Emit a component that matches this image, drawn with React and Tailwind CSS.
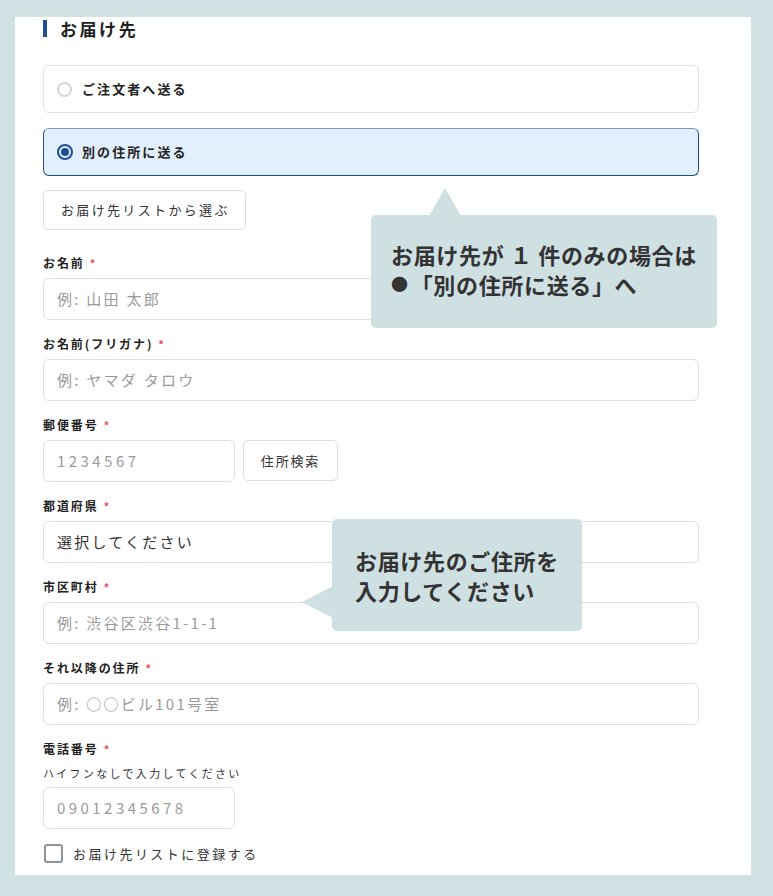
import React from "react";

const FONT = { fontFamily: '"Noto Sans CJK JP", "Noto Sans", sans-serif' };

function Label({ children }) {
  return (
    <div className="flex items-center h-[18px] text-[12px] font-bold text-[#222] tracking-[0.16em]">
      <span>{children}</span>
      <span className="ml-[5px] text-[#ee4d4d] text-[11px]">*</span>
    </div>
  );
}

function Input({ placeholder, w = "w-full", dark = false, num = false }) {
  return (
    <div
      className={`${w} h-[42px] rounded-[6px] border border-[#dedede] bg-white flex items-center px-[13px] text-[15px] ${
        num ? "tracking-[0.23em]" : "tracking-[0.15em]"
      } ${dark ? "text-[#333]" : "text-[#9a9a9a]"}`}
    >
      {placeholder}
    </div>
  );
}

function Field({ label, placeholder, w, dark, num, mt = "mt-[15px]", extra }) {
  return (
    <div className={mt}>
      <Label>{label}</Label>
      <div className="mt-[6px] flex gap-[8px]">
        <Input placeholder={placeholder} w={w} dark={dark} num={num} />
        {extra}
      </div>
    </div>
  );
}

export default function App() {
  return (
    <div style={FONT} className="relative w-[773px] h-[896px] bg-[#d0e1e3] overflow-hidden">
      <div className="absolute left-[15px] top-[17px] w-[736px] h-[858px] bg-white" />
      <div className="relative pl-[43px] pt-[19px] w-[699px]">
        {/* Heading */}
        <div className="flex items-center h-[18px]">
          <div className="w-[4px] h-[17px] bg-[#1d4f91]" />
          <div className="ml-[13px] text-[17px] font-bold text-[#222] tracking-[0.15em] leading-none">お届け先</div>
        </div>

        {/* Radio cards */}
        <div className="mt-[28px] h-[48px] rounded-[6px] border border-[#e0e0e0] bg-white flex items-center pl-[13px]">
          <div className="w-[15px] h-[15px] rounded-full border-2 border-[#d4d4d4]" />
          <div className="ml-[10px] text-[13px] font-bold text-[#222] tracking-[0.16em]">ご注文者へ送る</div>
        </div>
        <div className="mt-[15px] h-[48px] rounded-[6px] border border-[#1f4f88] border-t-[#7f9bbc] bg-[#e2effc] flex items-center pl-[13px]">
          <div className="w-[16px] h-[16px] rounded-full border-2 border-[#1d4f91] flex items-center justify-center">
            <div className="w-[8px] h-[8px] rounded-full bg-[#1d4f91]" />
          </div>
          <div className="ml-[9px] text-[13px] font-bold text-[#222] tracking-[0.16em]">別の住所に送る</div>
        </div>

        <div className="mt-[14px] w-[203px] h-[40px] rounded-[5px] border border-[#dcdcdc] bg-white flex items-center pl-[17px] text-[13px] text-[#333] tracking-[0.18em]">
          お届け先リストから選ぶ
        </div>

        <Field mt="mt-[24px]" label="お名前" placeholder="例: 山田 太郎" />
        <Field label="お名前(フリガナ)" placeholder="例: ヤマダ タロウ" />
        <Field
          label="郵便番号"
          placeholder="1234567"
          num
          w="w-[192px]"
          extra={
            <div className="w-[95px] h-[41px] rounded-[5px] border border-[#dcdcdc] bg-white flex items-center justify-center text-[13px] text-[#333] tracking-[0.14em]">
              住所検索
            </div>
          }
        />
        <Field label="都道府県" placeholder="選択してください" dark />
        <Field label="市区町村" placeholder="例: 渋谷区渋谷1-1-1" />
        <Field label="それ以降の住所" placeholder="例: ○○ビル101号室" />

        <div className="mt-[15px]">
          <Label>電話番号</Label>
          <div className="mt-[7px] h-[16px] flex items-center text-[11px] text-[#333] tracking-[0.21em]">
            ハイフンなしで入力してください
          </div>
          <div className="mt-[6px]">
            <Input placeholder="09012345678" w="w-[192px]" num />
          </div>
        </div>

        <div className="mt-[15px] flex items-center">
          <div className="ml-[1px] w-[19px] h-[19px] rounded-[3px] border-2 border-[#8e939b] bg-white" />
          <div className="ml-[10px] text-[13px] text-[#333] tracking-[0.19em]">お届け先リストに登録する</div>
        </div>
      </div>

      {/* Callout 1 */}
      <div className="absolute left-[371px] top-[215px] w-[346px] h-[113px] rounded-[5px] bg-[#cfe0e3] pl-[20px] pt-[24px] text-[22px] font-bold text-[#333] leading-[30px] tracking-[0.03em]">
        <div>お届け先が １ 件のみの場合は</div>
        <div className="flex items-center">
          <span className="text-[17px] mr-[2px]">●</span>
          <span>「別の住所に送る」へ</span>
        </div>
      </div>
      <svg className="absolute left-[429px] top-[188px]" width="32" height="28" viewBox="0 0 32 28">
        <polygon points="0,28 16,0 32,28" fill="#cfe0e3" />
      </svg>

      {/* Callout 2 */}
      <div className="absolute left-[332px] top-[519px] w-[250px] h-[112px] rounded-[5px] bg-[#cfe0e3] pl-[23px] pt-[26px] text-[22px] font-bold text-[#333] leading-[30px] tracking-[0.03em]">
        <div>お届け先のご住所を</div>
        <div>入力してください</div>
      </div>
      <svg className="absolute left-[302px] top-[586px]" width="31" height="32" viewBox="0 0 31 32">
        <polygon points="31,0 0,16 31,32" fill="#cfe0e3" />
      </svg>
    </div>
  );
}
